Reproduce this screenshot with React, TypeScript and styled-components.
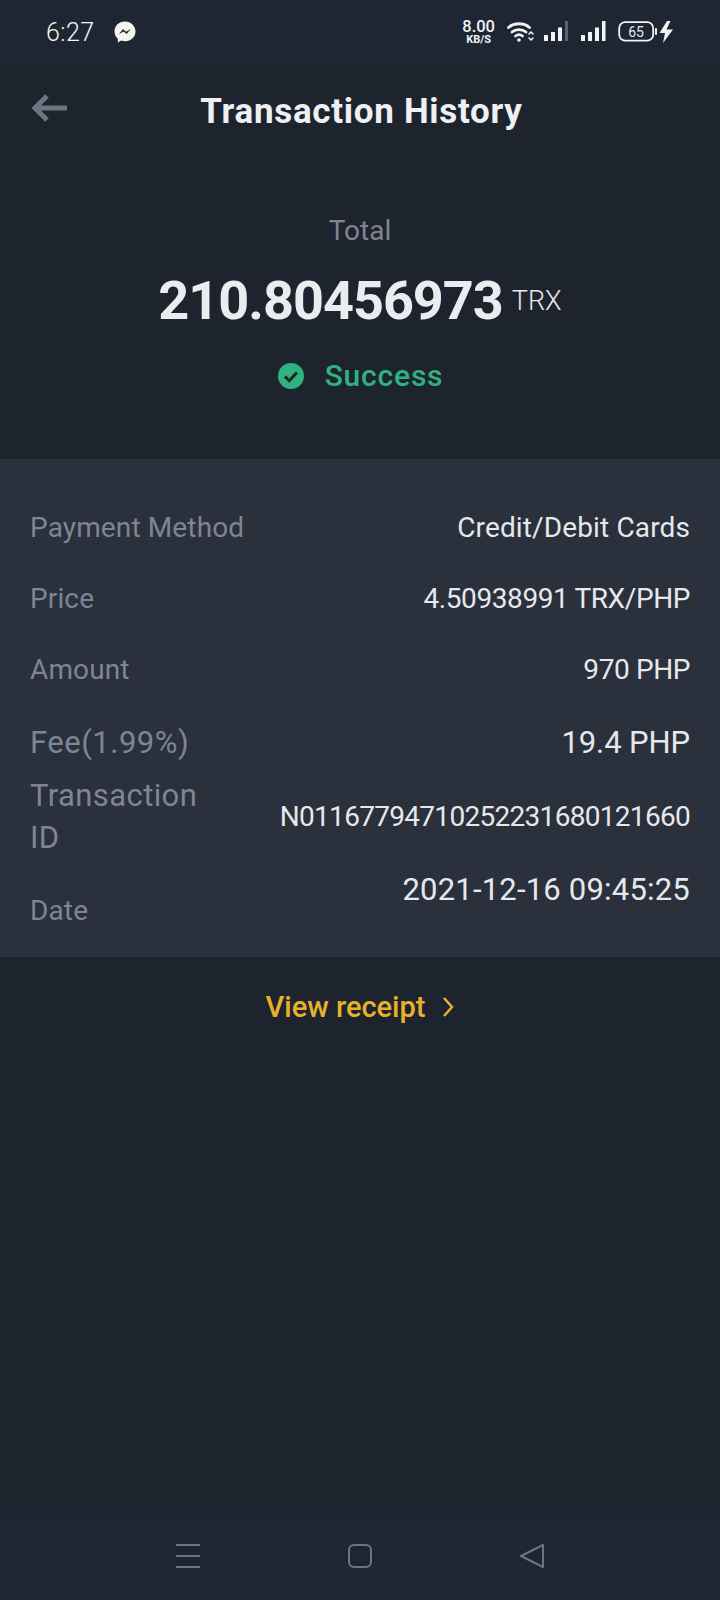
import React from 'react'
import styled, { createGlobalStyle } from 'styled-components'

const Global = createGlobalStyle`
  html, body { margin: 0; padding: 0; background: #1e242e; }
  * { box-sizing: border-box; }
`

const Page = styled.div`
  width: 720px;
  height: 1600px;
  display: flex;
  flex-direction: column;
  background: #1e242e;
  font-family: Roboto, "Liberation Sans", sans-serif;
  color: #eaecef;
  overflow: hidden;
`

const StatusBar = styled.div`
  height: 64px;
  flex: none;
  background: #1f2633;
  display: flex;
  align-items: center;
  justify-content: space-between;
  padding: 0 46px 0 46px;
`

const StatusLeft = styled.div`
  display: flex;
  align-items: center;
  gap: 19px;
`

const Clock = styled.span`
  font-size: 25px;
  font-weight: 300;
  letter-spacing: 0.4px;
  color: #f2f3f5;
`

const StatusRight = styled.div`
  display: flex;
  align-items: center;
`

const Speed = styled.div`
  display: flex;
  flex-direction: column;
  align-items: center;
  color: #f2f3f5;
  font-weight: 500;
  margin-right: 12px;
`
const SpeedValue = styled.span`
  font-size: 16.500px;
  line-height: 14px;
`
const SpeedUnit = styled.span`
  font-size: 11px;
  line-height: 11px;
  font-weight: 700;
`

const Header = styled.div`
  height: 94px;
  flex: none;
  display: flex;
  align-items: center;
  justify-content: center;
  padding-left: 3px;
  position: relative;
`

const BackButton = styled.div`
  position: absolute;
  left: 30px;
  top: 28px;
  display: flex;
`

const Title = styled.h1`
  margin: 0;
  font-size: 35px;
  font-weight: 700;
  color: #eef0f3;
  letter-spacing: 0.7px;
`

const Summary = styled.div`
  height: 301px;
  flex: none;
  display: flex;
  flex-direction: column;
  align-items: center;
  padding-top: 55px;
`

const TotalLabel = styled.div`
  font-size: 28px;
  line-height: 36px;
  color: #7f8592;
`

const AmountRow = styled.div`
  margin-top: 19px;
  display: flex;
  align-items: center;
  gap: 9px;
  line-height: 66px;
`

const Amount = styled.span`
  font-size: 54px;
  font-weight: 700;
  letter-spacing: -1px;
  color: #eaecef;
`

const Unit = styled.span`
  font-size: 27px;
  font-weight: 300;
  color: #e6e8ec;
`

const StatusRow = styled.div`
  margin-top: 24px;
  display: flex;
  align-items: center;
  gap: 20px;
  color: #30b27f;
  font-size: 30px;
  font-weight: 500;
  letter-spacing: 0.8px;
`

const Details = styled.div`
  height: 498px;
  flex: none;
  background: #2a303c;
  padding: 33px 30px 0;
  display: flex;
  flex-direction: column;
`

const Row = styled.div<{ $height: number; $top?: number }>`
  height: ${p => p.$height}px;
  padding-top: ${p => p.$top || 0}px;
  flex: none;
  display: flex;
  justify-content: space-between;
  align-items: center;
`

const Label = styled.div<{ $size?: number; $spacing?: number; $bottom?: boolean }>`
  width: 190px;
  white-space: nowrap;
  font-size: ${p => p.$size || 28}px;
  line-height: 42px;
  color: #7f8592;
  letter-spacing: ${p => p.$spacing ?? 0.13}px;
  align-self: ${p => (p.$bottom ? 'flex-end' : 'auto')};
`

const Value = styled.div<{ $size?: number; $spacing?: number; $top?: boolean }>`
  font-size: ${p => p.$size || 28}px;
  line-height: 42px;
  color: #e6e8ec;
  white-space: nowrap;
  letter-spacing: ${p => p.$spacing ?? 0.13}px;
  align-self: ${p => (p.$top ? 'flex-start' : 'auto')};
`

const ReceiptLink = styled.div`
  margin-top: 27px;
  display: flex;
  align-items: center;
  justify-content: center;
  gap: 17px;
  color: #e8b12c;
  font-size: 29px;
  font-weight: 500;
  line-height: 46px;
`

const Spacer = styled.div`
  flex: 1;
`

const NavBar = styled.div`
  height: 85px;
  flex: none;
  background: #1f2633;
  display: flex;
  align-items: center;
  justify-content: center;
  gap: 146px;
  padding: 0 0 4px 0;
`

const App: React.FC = () => {
  return (
    <Page>
      <Global />
      <StatusBar>
        <StatusLeft>
          <Clock>6:27</Clock>
          <svg width="24" height="24" viewBox="0 0 24 24">
            <path d="M12 1.500C5.900 1.500 1.500 5.800 1.500 11.500c0 3 1.200 5.500 3.300 7.300v3.700l3.400-1.900c1.200.4 2.500.6 3.800.6 6.100 0 10.500-4.300 10.500-9.700S18.100 1.500 12 1.500z" fill="#f5f5f0" />
            <path d="M5.800 14.300l4.200-5.200 3 2.600 4.900-2.700-4.300 5.100-3-2.500z" fill="#1f2633" />
          </svg>
        </StatusLeft>
        <StatusRight>
          <Speed>
            <SpeedValue>8.00</SpeedValue>
            <SpeedUnit>KB/S</SpeedUnit>
          </Speed>
          <svg width="27" height="24" viewBox="0 0 27 24" fill="none" stroke="#f2f3f5" strokeWidth="2.800" strokeLinecap="round">
            <path d="M1.500 7.500C7 2.500 17 2.500 22.500 7.500" />
            <path d="M5 12c3.800-3.200 10.200-3.200 14 0" />
            <path d="M8.500 16c2-1.500 5-1.500 7 0" />
            <circle cx="12" cy="20" r="1.800" fill="#f2f3f5" stroke="none" />
            <path d="M22 14l2-2 2 2M22 18l2 2 2-2" strokeWidth="1.500" />
          </svg>
          <svg style={{ marginLeft: 9 }} width="26" height="24" viewBox="0 0 26 24">
            <rect x="1" y="15" width="4" height="6" fill="#f2f3f5" />
            <rect x="8" y="12" width="4" height="9" fill="#f2f3f5" />
            <rect x="15" y="7.500" width="4" height="13.500" fill="#f2f3f5" />
            <rect x="22" y="1" width="3" height="20" fill="#5b616d" />
          </svg>
          <svg style={{ marginLeft: 11 }} width="26" height="24" viewBox="0 0 26 24">
            <rect x="1" y="15" width="4" height="6" fill="#f2f3f5" />
            <rect x="8" y="12" width="4" height="9" fill="#f2f3f5" />
            <rect x="15" y="7.500" width="4" height="13.500" fill="#f2f3f5" />
            <rect x="22" y="1" width="3.500" height="20" fill="#f2f3f5" />
          </svg>
          <svg style={{ marginLeft: 12 }} width="56" height="26" viewBox="0 0 56 26">
            <rect x="1.200" y="3.200" width="34" height="18.500" rx="6" fill="none" stroke="#f2f3f5" strokeWidth="1.800" />
            <text x="18" y="17.500" textAnchor="middle" fontSize="14" fill="#e6e8ec" fontFamily="Roboto, sans-serif">65</text>
            <rect x="37" y="9" width="2" height="7" rx="1" fill="#f2f3f5" />
            <path d="M49 2L41.500 14h5.500l-2 10L55 10.500h-6.500l4-8.500z" fill="#f2f3f5" />
          </svg>
        </StatusRight>
      </StatusBar>
      <Header>
        <BackButton>
          <svg width="38" height="32" viewBox="0 0 38 32" fill="none" stroke="#6f7580" strokeWidth="5">
            <path d="M37 16H4" />
            <path d="M17 4L5 16l12 12" />
          </svg>
        </BackButton>
        <Title>Transaction History</Title>
      </Header>
      <Summary>
        <TotalLabel>Total</TotalLabel>
        <AmountRow>
          <Amount>210.80456973</Amount>
          <Unit>TRX</Unit>
        </AmountRow>
        <StatusRow>
          <svg width="28" height="28" viewBox="0 0 28 28">
            <circle cx="14" cy="14" r="13" fill="#30b27f" />
            <path d="M8 14.500l4.300 4.200L20 10.500" fill="none" stroke="#1e242e" strokeWidth="3" />
          </svg>
          Success
        </StatusRow>
      </Summary>
      <Details>
        <Row $height={71}>
          <Label>Payment Method</Label>
          <Value>Credit/Debit Cards</Value>
        </Row>
        <Row $height={71}>
          <Label>Price</Label>
          <Value $spacing={-0.4}>4.50938991 TRX/PHP</Value>
        </Row>
        <Row $height={72}>
          <Label>Amount</Label>
          <Value $spacing={-0.4}>970 PHP</Value>
        </Row>
        <Row $height={74}>
          <Label $size={31} $spacing={0.5}>Fee(1.99%)</Label>
          <Value $size={31} $spacing={-0.1}>19.4 PHP</Value>
        </Row>
        <Row $height={74}>
          <Label $size={31} $spacing={0.4}>Transaction<br />ID</Label>
          <Value $spacing={-0.7}>N01167794710252231680121660</Value>
        </Row>
        <Row $height={78} $top={15}>
          <Label $bottom>Date</Label>
          <Value $size={31} $spacing={0.2} $top>2021-12-16 09:45:25</Value>
        </Row>
      </Details>
      <ReceiptLink>
        View receipt
        <svg width="12" height="22" viewBox="0 0 12 22" fill="none" stroke="#e8b12c" strokeWidth="2.500">
          <path d="M2 2l8 9-8 9" />
        </svg>
      </ReceiptLink>
      <Spacer />
      <NavBar>
        <svg width="26" height="26" viewBox="0 0 26 26" fill="none" stroke="#6f7580" strokeWidth="2">
          <path d="M1 2h24M1 13h24M1 24h24" />
        </svg>
        <svg width="26" height="26" viewBox="0 0 26 26" fill="none" stroke="#6f7580" strokeWidth="2">
          <rect x="2" y="2" width="22" height="22" rx="5" />
        </svg>
        <svg width="26" height="26" viewBox="0 0 26 26" fill="none" stroke="#6f7580" strokeWidth="2" strokeLinejoin="round">
          <path d="M24 2v22L2 13z" />
        </svg>
      </NavBar>
    </Page>
  )
}

export default App
